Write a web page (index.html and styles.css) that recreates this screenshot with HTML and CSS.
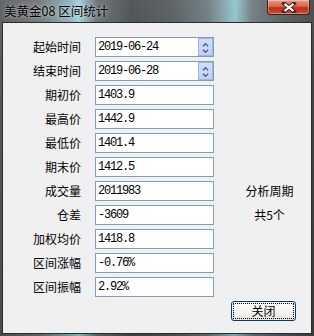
FILE: index.html
```
<!DOCTYPE html>
<html>
<head>
<meta charset="utf-8">
<link rel="stylesheet" href="styles.css">
</head>
<body>
<div class="window">
  <div class="titlebar">
    <span class="title">美黄金08 区间统计</span>
    <div class="close">
      <svg width="16" height="11" viewBox="0 0 16 11"><path d="M3 1.5 L13 9.5 M13 1.5 L3 9.5" stroke="#3a2a28" stroke-width="4" stroke-linecap="square"/><path d="M3.5 2 L12.5 9 M12.5 2 L3.5 9" stroke="#ffffff" stroke-width="2.2"/></svg>
    </div>
  </div>
  <div class="client">
    <div class="form">
      <div class="lbl">起始时间</div>
      <div class="field"><span class="val">2019-06-24</span><span class="spin"><svg width="15" height="18" viewBox="0 0 15 18"><path d="M4.5 7 L7.5 4 L10.5 7" fill="none" stroke="#4d6185" stroke-width="1.6"/><path d="M4.5 11 L7.5 14 L10.5 11" fill="none" stroke="#4d6185" stroke-width="1.6"/></svg></span></div>
      <div class="lbl">结束时间</div>
      <div class="field"><span class="val">2019-06-28</span><span class="spin"><svg width="15" height="18" viewBox="0 0 15 18"><path d="M4.5 7 L7.5 4 L10.5 7" fill="none" stroke="#4d6185" stroke-width="1.6"/><path d="M4.5 11 L7.5 14 L10.5 11" fill="none" stroke="#4d6185" stroke-width="1.6"/></svg></span></div>
      <div class="lbl">期初价</div>
      <div class="field"><span class="val">1403.9</span></div>
      <div class="lbl">最高价</div>
      <div class="field"><span class="val">1442.9</span></div>
      <div class="lbl">最低价</div>
      <div class="field"><span class="val">1401.4</span></div>
      <div class="lbl">期末价</div>
      <div class="field"><span class="val">1412.5</span></div>
      <div class="lbl">成交量</div>
      <div class="field"><span class="val">2011983</span></div>
      <div class="note">分析周期</div>
      <div class="lbl">仓差</div>
      <div class="field"><span class="val">-3609</span></div>
      <div class="note">共5个</div>
      <div class="lbl">加权均价</div>
      <div class="field"><span class="val">1418.8</span></div>
      <div class="lbl">区间涨幅</div>
      <div class="field"><span class="val">-0.76%</span></div>
      <div class="lbl">区间振幅</div>
      <div class="field"><span class="val">2.92%</span></div>
    </div>
    <div class="actions">
      <button class="btn"><span class="focus">关闭</span></button>
    </div>
  </div>
</div>
</body>
</html>
```
FILE: styles.css
```
html, body {
  margin: 0;
  padding: 0;
}
body {
  width: 314px;
  height: 336px;
  overflow: hidden;
  font-family: "Noto Sans CJK SC", "Liberation Sans", sans-serif;
  font-size: 12px;
  color: #000;
}
.window {
  width: 314px;
  height: 336px;
  box-sizing: border-box;
  padding: 0 2px 2px 2px;
  display: flex;
  flex-direction: column;
  background:
    linear-gradient(180deg, rgba(255,255,255,0.08) 0%, rgba(0,0,0,0) 25%, rgba(0,0,0,0.15) 100%),
    linear-gradient(90deg, #55595c 0%, #6b7073 12%, #86aeb6 22%, #9ccfd8 25%, #646c70 31%, #454b4e 42%, #52595c 55%, #6a767b 66%, #8fc2cb 75%, #6d7c80 80%, #52585b 90%, #444 100%);
}
.titlebar {
  height: 22px;
  flex: none;
  display: flex;
  align-items: flex-start;
  position: relative;
}
.title {
  margin-left: 2px;
  margin-top: 3px;
  line-height: 16px;
  font-size: 12.5px;
  color: #000;
  text-shadow: 0 0 5px rgba(255,255,255,0.55), 0 0 2px rgba(255,255,255,0.4);
}
.close {
  position: absolute;
  top: 0;
  right: 2px;
  width: 43px;
  height: 15px;
  box-sizing: border-box;
  border: 1px solid #3b1d18;
  border-top: none;
  border-radius: 0 0 4px 4px;
  background: linear-gradient(180deg, #e39a88 0%, #d8664e 45%, #bf2f18 55%, #cc4a30 100%);
  box-shadow: inset 0 0 0 1px rgba(255,255,255,0.35);
  display: flex;
  align-items: center;
  justify-content: center;
}
.client {
  flex: 1;
  border: 1px solid #2c2c2c;
  background: #f0f0f0;
  display: flex;
  flex-direction: column;
}
.form {
  display: grid;
  grid-template-columns: 78px 119px 1fr;
  grid-auto-rows: 20px;
  column-gap: 14px;
  row-gap: 4px;
  padding-top: 14px;
}
.lbl {
  grid-column: 1;
  text-align: right;
  line-height: 20px;
  white-space: nowrap;
}
.field {
  grid-column: 2;
  box-sizing: border-box;
  border: 1px solid #7f9db9;
  background: #fff;
  display: flex;
  align-items: center;
}
.val {
  flex: 1;
  padding-left: 2px;
  font-family: "Liberation Mono", monospace;
  font-size: 12px;
  letter-spacing: -1.2px;
  line-height: 18px;
}
.spin {
  width: 15px;
  height: 18px;
  box-sizing: border-box;
  background: linear-gradient(180deg, #cfdcfb 0%, #c1d2fa 100%);
  border: 1px solid #9db4e4;
  display: flex;
}
.note {
  grid-column: 3;
  text-align: center;
  line-height: 20px;
  white-space: nowrap;
}
.actions {
  display: flex;
  justify-content: flex-end;
  padding-right: 15px;
  margin-top: 4px;
}
.btn {
  width: 65px;
  height: 20px;
  box-sizing: border-box;
  border: 1px solid #003c74;
  border-radius: 3px;
  background: linear-gradient(180deg, #ffffff 0%, #f4f3ee 60%, #e3e2da 100%);
  padding: 1px;
  margin: 0;
  font-family: "Noto Sans CJK SC", sans-serif;
  font-size: 12px;
  color: #000;
  display: flex;
}
.focus {
  flex: 1;
  border: 1px dotted #000;
  display: flex;
  align-items: center;
  justify-content: center;
  line-height: 14px;
}
```
